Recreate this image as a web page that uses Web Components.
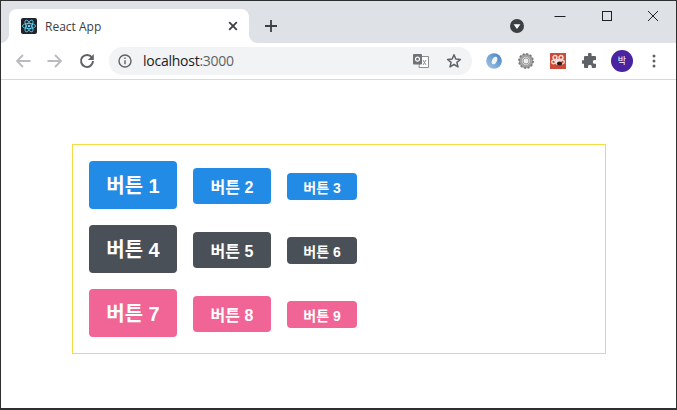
<!DOCTYPE html>
<html lang="ko">
<head>
<meta charset="utf-8">
<title>React App</title>
<style>
  html, body { margin: 0; height: 100%; background: #fff; }
</style>
</head>
<body>
<browser-window>
  <browser-tabstrip title-text="React App"></browser-tabstrip>
  <browser-toolbar address="localhost" port=":3000"></browser-toolbar>
  <button-box>
    <button-row>
      <ui-button color="blue" size="large">버튼 1</ui-button>
      <ui-button color="blue" size="medium">버튼 2</ui-button>
      <ui-button color="blue" size="small">버튼 3</ui-button>
    </button-row>
    <button-row>
      <ui-button color="gray" size="large">버튼 4</ui-button>
      <ui-button color="gray" size="medium">버튼 5</ui-button>
      <ui-button color="gray" size="small">버튼 6</ui-button>
    </button-row>
    <button-row>
      <ui-button color="pink" size="large">버튼 7</ui-button>
      <ui-button color="pink" size="medium">버튼 8</ui-button>
      <ui-button color="pink" size="small">버튼 9</ui-button>
    </button-row>
  </button-box>
</browser-window>

<script>
// Small helper, every element gets an open shadow root from a string
const define = (name, html) => {
  customElements.define(name, class extends HTMLElement {
    constructor() {
      super();
      this.attachShadow({ mode: 'open' });
    }
    connectedCallback() {
      this.shadowRoot.innerHTML = typeof html === 'function' ? html(this) : html;
    }
  });
};

// -----------------------------------------
// Window frame
// -----------------------------------------
define('browser-window', `
  <style>
    :host {
      display: flex;
      flex-direction: column;
      box-sizing: border-box;
      width: 677px;
      height: 410px;
      border: 1px solid #2e2f31;
      border-bottom-width: 2px;
      background: #fff;
      overflow: hidden;
    }
  </style>
  <slot></slot>
`);

define('browser-tabstrip', host => `
  <style>
    :host {
      display: flex;
      align-items: flex-end;
      flex: none;
      height: 42px;
      background: #dee1e6;
      padding-left: 8px;
      font: 12px "Open Sans", "Liberation Sans", sans-serif;
      color: #3c4043;
    }
    .tab {
      position: relative;
      box-sizing: border-box;
      display: flex;
      align-items: center;
      width: 240px;
      height: 34px;
      padding: 0 11px 0 12px;
      background: #fff;
      border-radius: 8px 8px 0 0;
    }
    .tab::before, .tab::after {
      content: "";
      position: absolute;
      bottom: 0;
      width: 8px;
      height: 8px;
    }
    .tab::before { left: -8px; background: radial-gradient(circle at 0 0, #dee1e6 7.5px, #fff 8px); }
    .tab::after { right: -8px; background: radial-gradient(circle at 100% 0, #dee1e6 7.5px, #fff 8px); }
    .title { flex: 1; margin-left: 8px; white-space: nowrap; }
    .close { display: block; }
    .new-tab { display: block; margin: 0 0 11px 16px; }
    .spacer { flex: 1; }
    .media { display: block; margin: 0 13px 9px 0; }
    .controls { align-self: flex-start; display: flex; }
    .controls svg { display: block; width: 46px; height: 30px; }
  </style>
  <div class="tab">
    <svg width="16" height="16" viewBox="0 0 16 16">
      <rect width="16" height="16" rx="2" fill="#20232a"/>
      <g fill="none" stroke="#61dafb" stroke-width=".8">
        <ellipse cx="8" cy="8" rx="6.6" ry="2.6"/>
        <ellipse cx="8" cy="8" rx="6.6" ry="2.6" transform="rotate(60 8 8)"/>
        <ellipse cx="8" cy="8" rx="6.6" ry="2.6" transform="rotate(120 8 8)"/>
      </g>
      <circle cx="8" cy="8" r="1.3" fill="#61dafb"/>
    </svg>
    <span class="title">${host.getAttribute('title-text')}</span>
    <svg class="close" width="10" height="10" viewBox="0 0 10 10">
      <path d="M1.2 1.2l7.6 7.6M8.8 1.2L1.2 8.8" stroke="#3c4043" stroke-width="1.8"/>
    </svg>
  </div>
  <svg class="new-tab" width="12" height="12" viewBox="0 0 12 12">
    <path d="M6 0v12M0 6h12" stroke="#3c4043" stroke-width="1.8"/>
  </svg>
  <span class="spacer"></span>
  <svg class="media" width="16" height="16" viewBox="0 0 16 16">
    <circle cx="8" cy="8" r="7" fill="#3c4043"/>
    <path d="M4.6 6.2h6.8L8 11z" fill="#fff"/>
  </svg>
  <div class="controls">
    <svg viewBox="0 0 46 30"><path d="M16.500 15.500h11" stroke="#202124"/></svg>
    <svg viewBox="0 0 46 30"><rect x="18.500" y="10.500" width="9" height="9" fill="none" stroke="#202124"/></svg>
    <svg viewBox="0 0 46 30"><path d="M18 10l10 10M28 10L18 20" stroke="#202124" fill="none"/></svg>
  </div>
`);

// -----------------------------------------
// Toolbar
// -----------------------------------------
define('browser-toolbar', host => `
  <style>
    :host {
      display: flex;
      align-items: center;
      flex: none;
      box-sizing: border-box;
      height: 37px;
      padding: 0 6px 1px 5px;
      background: #fff;
      border-bottom: 1px solid #d8d9db;
    }
    .cell { flex: none; display: flex; align-items: center; justify-content: center; width: 32px; height: 28px; }
    .cell svg { display: block; }
    .cell.wide { width: 33px; }
    .omnibox {
      flex: 1;
      display: flex;
      align-items: center;
      height: 28px;
      margin: 0 6px;
      padding: 0 2px 0 9px;
      border-radius: 14px;
      background: #f1f3f4;
      font: 14px "Open Sans", "Liberation Sans", sans-serif;
      color: #202124;
    }
    .url { flex: 1; margin-left: 11px; white-space: nowrap; letter-spacing: -.25px; }
    .url span { color: #5f6368; }
    .avatar {
      width: 22px; height: 22px; border-radius: 50%;
      display: flex; align-items: center; justify-content: center;
      background: #4a23a0; color: #fff;
      font: 9px "Noto Sans CJK KR", sans-serif;
    }
  </style>
  <div class="cell wide"><svg width="16" height="14" viewBox="0 0 16 14"><path d="M15.500 7H2M8 1L2 7l6 6" fill="none" stroke="#b9bbbe" stroke-width="1.8"/></svg></div>
  <div class="cell"><svg width="16" height="14" viewBox="0 0 16 14"><path d="M.5 7H14M8 1l6 6-6 6" fill="none" stroke="#b9bbbe" stroke-width="1.8"/></svg></div>
  <div class="cell"><svg width="16" height="16" viewBox="0 0 16 16"><path d="M13 4.600A6 6 0 1 0 14 8" fill="none" stroke="#5f6368" stroke-width="2"/><path d="M14.800 1v6H8.800z" fill="#5f6368"/></svg></div>
  <div class="omnibox">
    <svg width="14" height="14" viewBox="0 0 14 14"><circle cx="7" cy="7" r="6" fill="none" stroke="#5f6368" stroke-width="1.4"/><path d="M7 6.200v4M7 3.600v1.500" stroke="#5f6368" stroke-width="1.4"/></svg>
    <span class="url">${host.getAttribute('address')}<span>${host.getAttribute('port')}</span></span>
    <div class="cell"><svg width="16" height="14" viewBox="0 0 16 14"><path d="M7 2.500h8.500v11H6z" fill="#fff" stroke="#8a8d90"/><path d="M10 6l3 5M13 6l-3 5" stroke="#8a8d90"/><rect x="0" y="0" width="9" height="10.500" rx="1" fill="#6f7377"/><circle cx="4.500" cy="5.200" r="2" fill="none" stroke="#fff" stroke-width="1.200"/></svg></div>
    <div class="cell" style="margin-left:1px"><svg width="16" height="16" viewBox="0 0 16 16"><path d="M8 1.800l1.800 4.200 4.600.4-3.500 3 1.100 4.500L8 11.500l-4 2.400 1.100-4.500-3.500-3 4.600-.4z" fill="none" stroke="#5f6368" stroke-width="1.500" stroke-linejoin="round"/></svg></div>
  </div>
  <div class="cell"><svg width="16" height="16" viewBox="0 0 16 16"><defs><linearGradient id="ring" x1="0" y1="1" x2="1" y2="0"><stop offset="0" stop-color="#a9c8e6"/><stop offset="1" stop-color="#3f7fc0"/></linearGradient></defs><circle cx="8" cy="8" r="7.800" fill="url(#ring)"/><ellipse cx="8.500" cy="7.500" rx="2.400" ry="4" transform="rotate(25 8.500 7.500)" fill="#f2f5f8"/></svg></div>
  <div class="cell"><svg width="16" height="16" viewBox="0 0 16 16"><circle cx="8" cy="8" r="5.500" fill="none" stroke="#a3a3a3" stroke-width="3.600"/><circle cx="8" cy="8" r="7" fill="none" stroke="#7a7a7a" stroke-width="1.800" stroke-dasharray="2 1.670"/><circle cx="8" cy="8" r="3" fill="#ececec" stroke="#777" stroke-width=".7"/></svg></div>
  <div class="cell"><svg width="16" height="16" viewBox="0 0 16 16"><rect width="16" height="16" fill="#cc4a3a"/><g fill="none" stroke="#f6e4dc" stroke-width="1.300"><circle cx="5" cy="4.500" r="2"/><circle cx="11" cy="4.500" r="2"/><circle cx="3.500" cy="9" r="1.800"/><circle cx="12.500" cy="9" r="1.800"/></g><circle cx="8" cy="9" r="3" fill="#f6e4dc"/><ellipse cx="9.500" cy="10.500" rx="2.600" ry="2" fill="#2b1a18"/></svg></div>
  <div class="cell"><svg width="16" height="16" viewBox="0 0 16 16"><path d="M6 1.500a1.800 1.800 0 0 1 3.600 0V3H13a1 1 0 0 1 1 1v3h-1.300a1.900 1.900 0 0 0 0 3.800H14V14a1 1 0 0 1-1 1H9.800v-1.300a1.900 1.900 0 0 0-3.800 0V15H3a1 1 0 0 1-1-1v-3.200H.8a1.800 1.800 0 0 1 0-3.600H2V4a1 1 0 0 1 1-1h3z" fill="#5f6368"/></svg></div>
  <div class="cell"><div class="avatar">박</div></div>
  <div class="cell"><svg width="4" height="14" viewBox="0 0 4 14"><circle cx="2" cy="2" r="1.500" fill="#5f6368"/><circle cx="2" cy="7" r="1.500" fill="#5f6368"/><circle cx="2" cy="12" r="1.500" fill="#5f6368"/></svg></div>
`);

// -----------------------------------------
// Page content
// -----------------------------------------
define('button-box', `
  <style>
    :host {
      display: flex;
      flex-direction: column;
      gap: 16px;
      box-sizing: border-box;
      width: 534px;
      height: 210px;
      margin: 64px 0 0 71px;
      padding: 16px;
      border: 1px solid #f4dc42;
    }
  </style>
  <slot></slot>
`);

define('button-row', `
  <style>
    :host { display: flex; align-items: flex-start; gap: 16px; height: 48px; }
  </style>
  <slot></slot>
`);

// Boxes sit on a shared baseline in the reference, hence the top margins
const SIZES = {
  large: 'width:88px;height:48px;font-size:20px;box-sizing:border-box;padding-bottom:2px',
  medium: 'width:78px;height:36px;font-size:16px;margin-top:7px',
  small: 'width:70px;height:27px;font-size:14px;margin-top:12px'
};
const COLORS = { blue: '#228be6', gray: '#495057', pink: '#f06595' };

define('ui-button', host => `
  <style>
    :host {
      display: flex;
      align-items: center;
      justify-content: center;
      flex: none;
      border-radius: 4px;
      color: #fff;
      font-family: "Liberation Sans", "Noto Sans CJK KR", sans-serif;
      font-weight: 700;
      white-space: nowrap;
      background: ${COLORS[host.getAttribute('color')]};
      ${SIZES[host.getAttribute('size')]};
    }
  </style>
  <slot></slot>
`);
</script>
</body>
</html>
